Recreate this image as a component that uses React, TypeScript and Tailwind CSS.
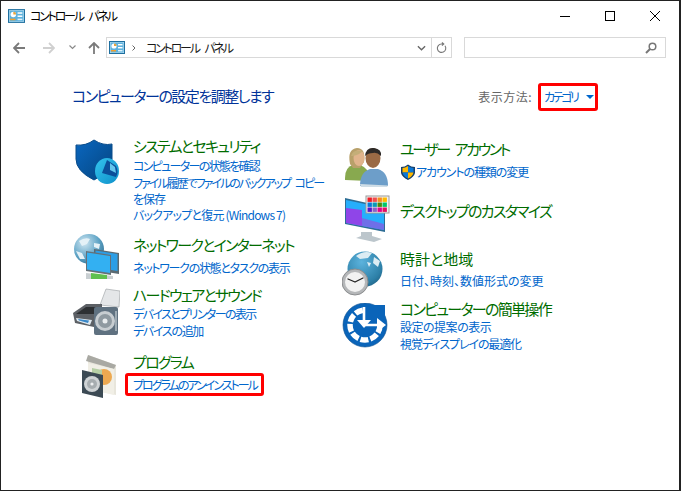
const jp = "font-['Noto_Sans_CJK_JP','Noto_Sans',sans-serif] [font-feature-settings:'palt']";

function PanelIcon({ className }: { className: string }) {
  return (
    <svg viewBox="0 0 16 13" className={className}>
      <rect x="0.5" y="0.5" width="15" height="12" fill="#bfe3f5" stroke="#1f6f9f" />
      <rect x="1.5" y="1.5" width="13" height="10" fill="#5fb2dd" />
      <circle cx="5" cy="5" r="2.6" fill="#fff" />
      <path d="M5 5V2.4A2.6 2.6 0 0 1 7.6 5z" fill="#e8a33a" />
      <rect x="9" y="3" width="4.5" height="1.4" fill="#fff" />
      <rect x="9" y="6" width="4.5" height="1.4" fill="#fff" />
      <rect x="2" y="9" width="5" height="1.5" fill="#f0a030" />
      <rect x="9" y="9" width="4.5" height="1.4" fill="#dff2fb" />
    </svg>
  );
}

function ShieldIcon() {
  return (
    <svg viewBox="0 0 48 48" className="w-12 h-12 mt-[3px]">
      <defs>
        <linearGradient id="sh" x1="0" y1="0" x2="1" y2="1">
          <stop offset="0" stopColor="#0a67c0" />
          <stop offset="1" stopColor="#05457f" />
        </linearGradient>
        <linearGradient id="pie" x1="0" y1="0" x2="1" y2="1">
          <stop offset="0" stopColor="#35c4ee" />
          <stop offset="1" stopColor="#0d8fc9" />
        </linearGradient>
      </defs>
      <path d="M4 6Q14 7 22 1Q31 7 40 5V20Q40 32 22 41Q4 32 4 20z" fill="url(#sh)" stroke="#0a4c8a" strokeWidth="1" />
      <ellipse cx="35" cy="32" rx="12" ry="13" fill="url(#pie)" />
      <path d="M35 21L44 27Q47 33 44 38L30 34z" fill="#0b4f9a" />
      <path d="M38 24L43 28L44 34L38 31z" fill="#63c6ee" />
    </svg>
  );
}

function NetworkIcon() {
  return (
    <svg viewBox="0 0 48 48" className="w-12 h-12 -mt-[1px]">
      <defs>
        <radialGradient id="gl" cx="0.35" cy="0.3" r="0.8">
          <stop offset="0" stopColor="#cfe6f2" />
          <stop offset="0.6" stopColor="#5fa4c6" />
          <stop offset="1" stopColor="#2f6f92" />
        </radialGradient>
      </defs>
      <circle cx="17" cy="15" r="15" fill="url(#gl)" />
      <path d="M7 7Q13 3 18 5L15 10L10 12zM4 17L10 19L13 25L8 25zM22 9L28 10L27 15L22 13z" fill="#e4f1f7" />
      <path d="M22 15L47 19V40L22 36z" fill="#5b6a72" />
      <path d="M23.5 16.5L45.5 20V37L23.5 33.5z" fill="#2c9ee6" />
      <path d="M14 17L39 21V41L14 37z" fill="#647078" />
      <path d="M15 18.5L38 22V39L15 35.5z" fill="#33b0f2" />
      <path d="M14 39L41 42V45H14z" fill="#c9cfd2" />
      <path d="M19 39L35 41V45H19z" fill="#5fc04f" />
    </svg>
  );
}

function PrinterIcon() {
  return (
    <svg viewBox="0 0 48 48" className="w-12 h-12 mt-[2px]">
      <path d="M28 18L34 2L48 4L47 20z" fill="#e4e6e8" stroke="#a5a9ac" strokeWidth="0.7" />
      <path d="M1 26L14 17H30V36L22 40L3 36z" fill="#5c6065" />
      <path d="M4 27L14 20H28L22 27z" fill="#2d3033" />
      <path d="M4 31L20 33L18 38L5 34z" fill="#dfe9f0" />
      <path d="M6 32L17 33.5L16 36L7 33.5z" fill="#3a88c8" />
      <rect x="22" y="20" width="24" height="28" rx="2" fill="#5f7180" />
      <circle cx="33" cy="34" r="10" fill="#c7cdd1" />
      <circle cx="33" cy="34" r="7" fill="#8f9aa1" />
      <circle cx="33" cy="34" r="2.5" fill="#e9edef" />
      <rect x="43" y="24" width="2" height="20" fill="#9eabb4" />
    </svg>
  );
}

function ProgramIcon() {
  return (
    <svg viewBox="0 0 48 48" className="w-12 h-12 mt-px">
      <path d="M16 2L44 12V42L16 36z" fill="#e8e6dc" />
      <path d="M14 8L16 2L44 12L42 16z" fill="#a9a9a3" />
      <path d="M16 10L42 16V42L16 36z" fill="#f1efe6" />
      <circle cx="32" cy="24" r="8" fill="#eda951" />
      <path d="M20 15L30 17V24L20 26z" fill="#b6cfa5" />
      <path d="M10 17L31 22V45L10 40z" fill="#3c4a54" />
      <circle cx="20" cy="31" r="8" fill="#cfd3d5" />
      <circle cx="20" cy="31" r="5" fill="#a7adb0" />
      <circle cx="20" cy="31" r="1.6" fill="#eef0f1" />
    </svg>
  );
}

function UsersIcon() {
  return (
    <svg viewBox="0 0 48 48" className="w-12 h-12 mt-[5px]">
      <path d="M3 34Q3 23 11 21H18Q27 24 27 34V37L3 36z" fill="#88a94f" />
      <path d="M8 20Q5 5 15 4Q24 4 22 18L18 24H11z" fill="#b8a06a" />
      <ellipse cx="17" cy="14" rx="5.5" ry="8" fill="#e0b48c" />
      <path d="M9 12Q11 5 21 7Q17 11 11 12z" fill="#c4ae78" />
      <path d="M18 42Q18 28 28 25H36Q46 28 46 42z" fill="#6d9ec9" />
      <path d="M18 40L46 41.5L45 43H19z" fill="#cfdde6" />
      <ellipse cx="31" cy="14" rx="7.5" ry="10" fill="#9a6a45" />
      <path d="M23 12Q24 3 32 4Q40 5 39 12Q35 8 31 9Q26 9 23 12z" fill="#2d2a28" />
    </svg>
  );
}

function DesktopIcon() {
  return (
    <svg viewBox="0 0 48 48" className="w-12 h-12 -mt-[7px]">
      <path d="M3 4L43 13V38L3 30z" fill="#2d6d95" />
      <path d="M4 6L42 14V36L4 29z" fill="#26aefc" />
      <path d="M4 14L20 16V32L4 29z" fill="#8f45e8" />
      <path d="M20 24L42 30V36L20 32z" fill="#6f6fe8" />
      <path d="M19 38H30V42L40 45L32 48L14 44L19 42z" fill="#bcc6cc" />
      <rect x="24" y="2" width="23" height="17" fill="#f3f3f3" stroke="#9a9a9a" />
      {["#ee1c25", "#f04e4e", "#f78b1f", "#ffb900", "#0a78d7", "#0a99b8", "#4c8a0c", "#00c76a", "#5a13c9", "#8a64c4", "#e3008c", "#e3115f"].map((c, i) => (
        <rect key={c} x={25.5 + (i % 4) * 5} y={3.5 + Math.floor(i / 4) * 5} width="4.4" height="4.4" fill={c} />
      ))}
    </svg>
  );
}

function ClockIcon() {
  return (
    <svg viewBox="0 0 48 48" className="w-12 h-12">
      <defs>
        <radialGradient id="gc" cx="0.4" cy="0.3" r="0.85">
          <stop offset="0" stopColor="#5cb3dd" />
          <stop offset="0.7" stopColor="#2d80a8" />
          <stop offset="1" stopColor="#1d5777" />
        </radialGradient>
      </defs>
      <circle cx="23" cy="20" r="17.5" fill="url(#gc)" />
      <path d="M14 7Q22 1 30 4L26 9L18 10zM32 8L38 12L36 18L31 14zM25 13L29 14L27 18z" fill="#dcecf3" />
      <circle cx="13" cy="33" r="13" fill="#b5b7b9" stroke="#8b8d8f" />
      <circle cx="13" cy="33" r="10" fill="#f2f2f2" />
      <path d="M13 33L6 30M13 33L21 29" stroke="#222" strokeWidth="1.3" strokeLinecap="round" />
    </svg>
  );
}

function EaseIcon() {
  return (
    <svg viewBox="0 0 48 48" className="w-12 h-12 mt-[4px]">
      <circle cx="23" cy="22" r="22" fill="#0a64b9" stroke="#0b4f8e" strokeWidth="0.6" />
      <circle cx="23" cy="22" r="15" fill="none" stroke="#fff" strokeWidth="5.5" strokeDasharray="8 2" />
      <circle cx="23" cy="22" r="10" fill="#0a64b9" />
      <path d="M23 22V2H43V22z" fill="#0a64b9" />
      <path d="M22 4V22H37" fill="none" stroke="#fff" strokeWidth="2.6" />
      <path d="M15 17L22 25L29 17z" fill="#fff" />
      <path d="M35 15L44 22L35 29z" fill="#fff" />
    </svg>
  );
}

function SmallShield() {
  return (
    <svg viewBox="0 0 16 16" className="w-[16px] h-[16px] shrink-0">
      <path d="M1 3Q5 3 8 0.5Q11 3 15 3V9Q14 13 8 16Q2 13 1 9z" fill="#173f6a" />
      <path d="M8 2Q5 4 2.5 4V8.5H8z" fill="#ffb900" />
      <path d="M8 2Q11 4 13.5 4V8.5H8z" fill="#0a78d7" />
      <path d="M2.5 8.5H8V14.5Q3.5 12.5 2.5 8.5z" fill="#0a78d7" />
      <path d="M13.5 8.5H8V14.5Q12.5 12.5 13.5 8.5z" fill="#ffb900" />
    </svg>
  );
}

function Title({ children, className = "tracking-[-1.7px]" }: { children: string; className?: string }) {
  return <div className={"h-5 text-[15px] leading-5 text-[#006c00] whitespace-nowrap " + className}>{children}</div>;
}

function Link({ children, className }: { children: React.ReactNode; className: string }) {
  return <div className={"text-[12px] leading-4 text-[#0066cc] whitespace-nowrap " + className}>{children}</div>;
}

function Section({ icon, title, titleClass, className, body, wide }: { icon: React.ReactNode; title: string; titleClass?: string; className: string; body?: React.ReactNode; wide?: boolean }) {
  return (
    <div className={"flex " + className}>
      <div className={wide ? "w-[61px] shrink-0 h-0" : "w-[58px] shrink-0 h-0"}>{icon}</div>
      <div className="flex-1 min-w-0">
        <Title className={titleClass}>{title}</Title>
        {body}
      </div>
    </div>
  );
}

export default function App() {
  return (
    <div className={"w-[681px] h-[491px] bg-white border border-[#222] border-r-[2px] overflow-hidden " + jp}>
      <div className="h-[30px] flex items-center pl-[7px]">
        <PanelIcon className="w-[17px] h-[14px]" />
        <span className="ml-[5px] text-[12px] text-black tracking-[-2.2px] [word-spacing:5px]">コントロール パネル</span>
        <div className="ml-auto flex items-center mr-[19px] gap-[35px]">
          <div className="w-[10px] h-px bg-black" />
          <div className="w-[10px] h-[10px] border border-black" />
          <svg viewBox="0 0 10 10" className="w-[10px] h-[10px]"><path d="M0 0L10 10M10 0L0 10" stroke="#000" strokeWidth="1" /></svg>
        </div>
      </div>
      <div className="mt-[6px] h-[21px] flex items-center pl-[12px]">
        <svg viewBox="0 0 12 12" className="w-[12px] h-[12px]"><path d="M6 1L1 6L6 11M1 6H12" fill="none" stroke="#7a7a7a" strokeWidth="1.8" /></svg>
        <svg viewBox="0 0 12 12" className="ml-[18px] w-[12px] h-[12px]"><path d="M6 1L11 6L6 11M11 6H0" fill="none" stroke="#d0d0d0" strokeWidth="1.8" /></svg>
        <svg viewBox="0 0 7 5" className="ml-[14px] w-[7px] h-[5px]"><path d="M0.5 0.5L3.5 3.5L6.5 0.5" fill="none" stroke="#8a8a8a" strokeWidth="1.2" /></svg>
        <svg viewBox="0 0 12 12" className="ml-[12px] w-[12px] h-[12px]"><path d="M1 6L6 1L11 6M6 1V12" fill="none" stroke="#7a7a7a" strokeWidth="1.8" /></svg>
        <div className="ml-[6px] w-[346px] h-[21px] border border-[#d9d9d9] flex items-center pl-[2px]">
          <PanelIcon className="w-[16px] h-[13px]" />
          <svg viewBox="0 0 4 6" className="ml-[7px] w-[4px] h-[6px]"><path d="M0.5 0.5L3 3L0.5 5.5" fill="none" stroke="#666" strokeWidth="1" /></svg>
          <span className="ml-[10px] text-[12px] text-[#1a1a1a] tracking-[-2.2px] [word-spacing:5px]">コントロール パネル</span>
          <svg viewBox="0 0 10 6" className="ml-auto mr-[5px] w-[9px] h-[6px]"><path d="M1 1L5 5L9 1" fill="none" stroke="#666" strokeWidth="1.5" /></svg>
          <div className="w-[20px] h-full border-l border-[#d9d9d9] flex items-center justify-center">
            <svg viewBox="0 0 12 12" className="w-[11px] h-[12px]"><path d="M9.8 3.5A4.6 4.6 0 1 1 6 1.6H7.5M6.5 0L8.5 1.7L6.5 3.5" fill="none" stroke="#777" strokeWidth="1.2" /></svg>
          </div>
        </div>
        <div className="ml-[12px] w-[202px] h-[21px] border border-[#d9d9d9] flex items-center justify-end pr-[8px]">
          <svg viewBox="0 0 12 12" className="w-[12px] h-[12px]"><circle cx="7.5" cy="4.5" r="3.3" fill="none" stroke="#777" strokeWidth="1.5" /><path d="M5 7L1 11" stroke="#777" strokeWidth="2" /></svg>
        </div>
      </div>
      <div className="mt-[25px] pl-[71px] pr-[81px] flex items-center h-[28px]">
        <h1 className="text-[15px] font-normal text-[#003399] tracking-[-1.5px] -mt-[2px]">コンピューターの設定を調整します</h1>
        <span className="ml-auto text-[12px] text-[#666] tracking-[0.5px]">表示方法:</span>
        <div className="ml-[6px] w-[60px] h-[28px] border-[3px] border-[#f00] rounded-[3px] flex items-center pl-[3px]">
          <span className="text-[12px] text-[#0066cc] whitespace-nowrap tracking-[-2.4px]">カテゴリ</span>
          <div className="ml-auto mr-[1px] w-0 h-0 border-x-[4px] border-x-transparent border-t-[4px] border-t-[#0066cc]" />
        </div>
      </div>
      <div className="mt-[25px] pl-[71px] grid grid-cols-[270px_290px]">
        <div>
          <Section
            wide
            icon={<ShieldIcon />}
            title="システムとセキュリティ"
            className=""
            body={
              <div className="mt-[2px] flex flex-col gap-px">
                <Link className="tracking-[-1.7px]">コンピューターの状態を確認</Link>
                <Link className="tracking-[-2px] [word-spacing:4px]">ファイル履歴でファイルのバックアップ コピー<br /><span className="tracking-[-1px]">を保存</span></Link>
                <Link className="tracking-[-0.8px] -mt-px">バックアップと復元 (Windows 7)</Link>
              </div>
            }
          />
          <Section
            wide
            icon={<NetworkIcon />}
            title="ネットワークとインターネット"
            className="mt-[12px]"
            body={<div className="mt-[5px]"><Link className="tracking-[-1.3px]">ネットワークの状態とタスクの表示</Link></div>}
          />
          <Section
            wide
            icon={<PrinterIcon />}
            title="ハードウェアとサウンド"
            className="mt-[9px]"
            body={
              <div className="mt-px flex flex-col gap-px">
                <Link className="tracking-[-1.6px]">デバイスとプリンターの表示</Link>
                <Link className="tracking-[-1.3px]">デバイスの追加</Link>
              </div>
            }
          />
          <Section
            wide
            icon={<ProgramIcon />}
            title="プログラム"
            className="mt-[13px]"
            body={
              <div className="mt-px -ml-[8px] w-[139px] h-[23px] border-[3px] border-[#f00] rounded-[3px] pl-[5px] flex items-center">
                <Link className="tracking-[-2px]">プログラムのアンインストール</Link>
              </div>
            }
          />
        </div>
        <div className="mt-[3px]">
          <Section
            icon={<UsersIcon />}
            title="ユーザー アカウント"
            titleClass="tracking-[-2.4px] [word-spacing:5px]"
            className=""
            body={
              <div className="mt-[5px] flex items-center">
                <SmallShield />
                <Link className="tracking-[-1.1px]">アカウントの種類の変更</Link>
              </div>
            }
          />
          <Section icon={<DesktopIcon />} title="デスクトップのカスタマイズ" className="mt-[21px]" />
          <Section
            icon={<ClockIcon />}
            title="時計と地域"
            titleClass="tracking-normal"
            className="mt-[28px]"
            body={<div className="mt-[4px]"><Link className="">日付、時刻、数値形式の変更</Link></div>}
          />
          <Section
            icon={<EaseIcon />}
            title="コンピューターの簡単操作"
            className="mt-[10px]"
            body={
              <div className="flex flex-col">
                <Link className="tracking-[-0.5px]">設定の提案の表示</Link>
                <Link className="tracking-[-1.1px] mt-px">視覚ディスプレイの最適化</Link>
              </div>
            }
          />
        </div>
      </div>
    </div>
  );
}
